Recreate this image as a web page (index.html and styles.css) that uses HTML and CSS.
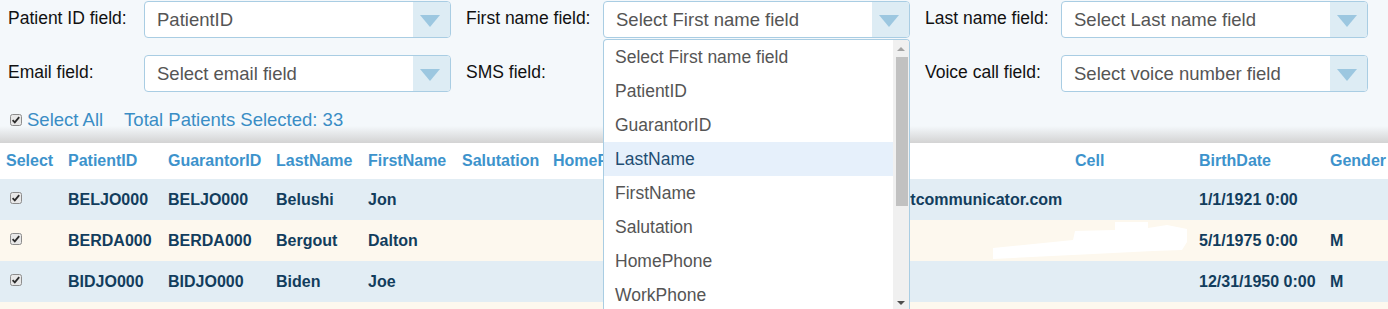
FILE: index.html
```html
<!DOCTYPE html>
<html lang="en">
<head>
  <meta charset="UTF-8">
  <title>Patient Selection</title>
  <link rel="stylesheet" href="styles.css">
</head>
<body>

<div class="filters">
  <div class="field-grid">
    <div class="field">
      <label class="field-label">Patient ID field:</label>
      <div class="select"><span class="select-value">PatientID</span><span class="select-arrow"></span></div>
    </div>
    <div class="field">
      <label class="field-label">First name field:</label>
      <div class="select"><span class="select-value">Select First name field</span><span class="select-arrow"></span></div>
      <!-- open dropdown -->
      <div class="options">
        <ul class="option-list">
          <li>Select First name field</li>
          <li>PatientID</li>
          <li>GuarantorID</li>
          <li class="active">LastName</li>
          <li>FirstName</li>
          <li>Salutation</li>
          <li>HomePhone</li>
          <li>WorkPhone</li>
          <li>Email</li>
          <li>Cell</li>
        </ul>
        <div class="scrollbar">
          <span class="scroll-up"></span>
          <span class="scroll-thumb"></span>
          <span class="scroll-down"></span>
        </div>
      </div>
    </div>
    <div class="field">
      <label class="field-label">Last name field:</label>
      <div class="select"><span class="select-value">Select Last name field</span><span class="select-arrow"></span></div>
    </div>
    <div class="field">
      <label class="field-label">Email field:</label>
      <div class="select"><span class="select-value">Select email field</span><span class="select-arrow"></span></div>
    </div>
    <div class="field">
      <label class="field-label">SMS field:</label>
      <div class="select"><span class="select-value">Select SMS number field</span><span class="select-arrow"></span></div>
    </div>
    <div class="field">
      <label class="field-label">Voice call field:</label>
      <div class="select"><span class="select-value">Select voice number field</span><span class="select-arrow"></span></div>
    </div>
  </div>

  <div class="select-all">
    <svg class="check" width="12" height="12" viewBox="0 0 12 12"><rect x="0.5" y="0.5" width="11" height="11" rx="2" fill="#e8e8e8" stroke="#8c8c8c"/><path d="M2.6 6.1 L4.8 8.4 L9.2 3.2" fill="none" stroke="#2b2b2b" stroke-width="1.8"/></svg>
    <span>Select All</span>
    <span class="total">Total Patients Selected: 33</span>
  </div>
</div>

<div class="table-wrap">
  <table class="patients">
    <colgroup>
      <col style="width:62px"><col style="width:100px"><col style="width:108px"><col style="width:92px">
      <col style="width:94px"><col style="width:91px"><col style="width:113px"><col style="width:130px">
      <col style="width:279px"><col style="width:124px"><col style="width:131px"><col style="width:76px">
    </colgroup>
    <thead>
      <tr>
        <th>Select</th><th>PatientID</th><th>GuarantorID</th><th>LastName</th><th>FirstName</th><th>Salutation</th>
        <th>HomePhone</th><th>WorkPhone</th><th>Email</th><th>Cell</th><th>BirthDate</th><th>Gender</th>
      </tr>
    </thead>
    <tbody>
      <tr class="odd">
        <td class="pick"><svg class="check" width="12" height="12" viewBox="0 0 12 12"><rect x="0.5" y="0.5" width="11" height="11" rx="2" fill="#e8e8e8" stroke="#8c8c8c"/><path d="M2.6 6.1 L4.8 8.4 L9.2 3.2" fill="none" stroke="#2b2b2b" stroke-width="1.8"/></svg></td>
        <td>BELJO000</td><td>BELJO000</td><td>Belushi</td><td>Jon</td><td></td><td></td><td></td>
        <td>jbelushi@smartcommunicator.com</td><td></td><td>1/1/1921 0:00</td><td></td>
      </tr>
      <tr class="even">
        <td class="pick"><svg class="check" width="12" height="12" viewBox="0 0 12 12"><rect x="0.5" y="0.5" width="11" height="11" rx="2" fill="#e8e8e8" stroke="#8c8c8c"/><path d="M2.6 6.1 L4.8 8.4 L9.2 3.2" fill="none" stroke="#2b2b2b" stroke-width="1.8"/></svg></td>
        <td>BERDA000</td><td>BERDA000</td><td>Bergout</td><td>Dalton</td><td></td><td></td><td></td>
        <td></td><td></td><td>5/1/1975 0:00</td><td>M</td>
      </tr>
      <tr class="odd">
        <td class="pick"><svg class="check" width="12" height="12" viewBox="0 0 12 12"><rect x="0.5" y="0.5" width="11" height="11" rx="2" fill="#e8e8e8" stroke="#8c8c8c"/><path d="M2.6 6.1 L4.8 8.4 L9.2 3.2" fill="none" stroke="#2b2b2b" stroke-width="1.8"/></svg></td>
        <td>BIDJO000</td><td>BIDJO000</td><td>Biden</td><td>Joe</td><td></td><td></td><td></td>
        <td></td><td></td><td>12/31/1950 0:00</td><td>M</td>
      </tr>
      <tr class="even">
        <td class="pick"></td>
        <td></td><td></td><td></td><td></td><td></td><td></td><td></td>
        <td></td><td></td><td></td><td></td>
      </tr>
    </tbody>
  </table>
  <!-- redacted cell number -->
  <svg class="redaction" width="1400" height="170" viewBox="0 0 1400 170">
    <polygon fill="#fff" points="993,105 1073,97 1075,88 1115,87 1115,79 1148,79 1148,85 1167,82 1187,86 1187,99 1182,107 1153,108 1093,111 993,116"/>
  </svg>
</div>

</body>
</html>
```

FILE: styles.css
```css
body {
  margin: 0;
  font-family: "Liberation Sans", Arial, sans-serif;
  background: #fff;
  overflow: hidden;
}
.filters {
  height: 143px;
  box-sizing: border-box;
  padding: 1px 0 0 8px;
  background: linear-gradient(to bottom, #f4f8fb 0, #f4f8fb 126px, #d3d3d3 143px);
}
.field-grid {
  display: grid;
  grid-template-columns: 443px 444px 443px;
  column-gap: 15px;
  row-gap: 17px;
}
.field {
  display: grid;
  grid-template-columns: 1fr 307px;
  align-items: center;
  position: relative;
}
.field-label {
  font-size: 17.5px;
  color: #111;
  margin-top: -3px;
}
.select {
  height: 37px;
  box-sizing: border-box;
  border: 1px solid #a9cde3;
  border-radius: 4px;
  background: #fff;
  display: flex;
  overflow: hidden;
}
.select-value {
  flex: 1;
  padding-left: 12px;
  font-size: 18.5px;
  line-height: 35px;
  color: #555;
  white-space: nowrap;
  overflow: hidden;
}
.select-arrow {
  width: 37px;
  background: #ddecf4;
  display: flex;
  align-items: center;
  justify-content: center;
}
.select-arrow::after {
  content: "";
  margin: 3px 3px 0 0;
  border-left: 10.5px solid transparent;
  border-right: 10.5px solid transparent;
  border-top: 12px solid #9cc7e0;
}
.options {
  position: absolute;
  top: 38px;
  left: 137px;
  width: 307px;
  height: 272px;
  box-sizing: border-box;
  border: 1px solid #a9cde3;
  border-bottom: none;
  border-radius: 4px 4px 0 0;
  background: #fff;
  display: flex;
  overflow: hidden;
  z-index: 5;
}
.option-list {
  flex: 1;
  list-style: none;
  margin: 0;
  padding: 0;
}
.option-list li {
  height: 34px;
  line-height: 34px;
  padding-left: 11px;
  font-size: 17.5px;
  color: #555;
  white-space: nowrap;
}
.option-list li.active {
  background: #e6f0fb;
  color: #1f4d72;
}
.scrollbar {
  width: 16px;
  background: #f0f0f0;
  display: flex;
  flex-direction: column;
  align-items: center;
}
.scroll-up,
.scroll-down {
  height: 17px;
  width: 16px;
  display: flex;
  align-items: center;
  justify-content: center;
}
.scroll-up::after {
  content: "";
  border-left: 4px solid transparent;
  border-right: 4px solid transparent;
  border-bottom: 4px solid #a3a3a3;
}
.scroll-down {
  margin-top: auto;
}
.scroll-down::after {
  content: "";
  border-left: 4px solid transparent;
  border-right: 4px solid transparent;
  border-top: 4px solid #4f4f4f;
}
.scroll-thumb {
  width: 12px;
  height: 149px;
  background: #c1c1c1;
  margin-left: 1px;
}
.select-all {
  display: flex;
  align-items: center;
  margin-top: 17px;
  padding-left: 2px;
  font-size: 18.5px;
  color: #3a8dc5;
}
.select-all .check {
  margin-right: 5px;
}
.select-all .total {
  margin-left: 21px;
}
.table-wrap {
  position: relative;
}
.patients {
  border-collapse: collapse;
  table-layout: fixed;
  width: 1400px;
  font-size: 16px;
  font-weight: bold;
}
.patients th {
  height: 36px;
  padding: 0 0 0 6px;
  text-align: left;
  color: #3d93cc;
  background: #fff;
  white-space: nowrap;
  overflow: hidden;
}
.patients td {
  height: 41px;
  padding: 0 0 0 6px;
  color: #123d5d;
  white-space: nowrap;
  overflow: hidden;
}
.patients td.pick {
  padding-left: 10px;
}
.patients td .check {
  display: block;
  margin-top: -3px;
}
.patients tr.odd td {
  background: #e2edf4;
}
.patients tr.even td {
  background: #fdf8ee;
}
.redaction {
  position: absolute;
  top: 0;
  left: 0;
  pointer-events: none;
}
```
